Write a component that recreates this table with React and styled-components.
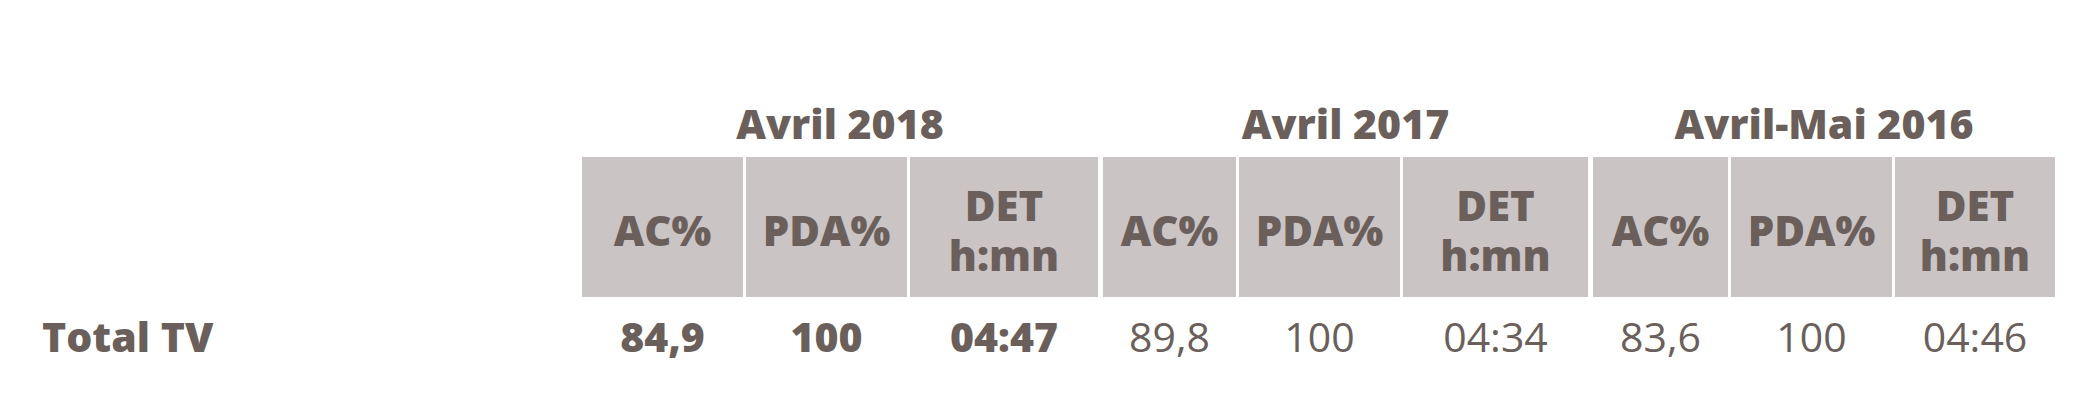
import styled, { createGlobalStyle } from "styled-components"

const GlobalStyle = createGlobalStyle`
  html, body {
    margin: 0;
    padding: 0;
    background: #ffffff;
  }
  body {
    font-family: "Open Sans", "Noto Sans", sans-serif;
    color: #6b5f5c;
  }
`

const Page = styled.div`
  width: 2100px;
  height: 420px;
  padding-top: 98px;
  box-sizing: border-box;
`

const Table = styled.div`
  display: grid;
  grid-template-columns: 579px 161px 161px 188px 135px 161px 185px 137px 161px 160px;
  column-gap: 3px;
`

const GroupTitle = styled.div`
  grid-column: ${p => p.$col} / span 3;
  margin-left: ${p => (p.$first ? "0" : "2px")};
  text-align: center;
  font-weight: 800;
  font-size: 41px;
  line-height: 50px;
  padding-bottom: 9px;
`

const HeadCell = styled.div`
  background: #cac4c4;
  height: 140px;
  margin-left: ${p => (p.$groupStart ? "2px" : "0")};
  display: flex;
  flex-direction: column;
  align-items: center;
  justify-content: center;
  padding-top: 6px;
  box-sizing: border-box;
  font-weight: 800;
  font-size: 42px;
  line-height: 50px;
  text-align: center;
`

const Label = styled.div`
  grid-column: 1;
  padding-left: 42px;
  margin-top: 14px;
  font-weight: 800;
  font-size: 41px;
  line-height: 50px;
`

const Value = styled.div`
  margin-left: ${p => (p.$groupStart ? "2px" : "0")};
  margin-top: 14px;
  text-align: center;
  font-size: 41px;
  line-height: 50px;
  font-weight: ${p => (p.$bold ? 800 : 400)};
`

const groups = [
  { title: "Avril 2018", bold: true, values: ["84,9", "100", "04:47"] },
  { title: "Avril 2017", bold: false, values: ["89,8", "100", "04:34"] },
  { title: "Avril-Mai 2016", bold: false, values: ["83,6", "100", "04:46"] },
]

export default function App() {
  return (
    <>
      <GlobalStyle />
      <Page>
        <Table>
          <div />
          {groups.map((g, i) => (
            <GroupTitle key={g.title} $col={2 + i * 3} $first={i === 0}>
              {g.title}
            </GroupTitle>
          ))}

          <div />
          {groups.map((g, i) => [
            <HeadCell key={g.title + "ac"} $groupStart={i > 0}>AC%</HeadCell>,
            <HeadCell key={g.title + "pda"}>PDA%</HeadCell>,
            <HeadCell key={g.title + "det"}>
              <span>DET</span>
              <span>h:mn</span>
            </HeadCell>,
          ])}

          <Label>Total TV</Label>
          {groups.map((g, i) =>
            g.values.map((v, j) => (
              <Value key={g.title + j} $bold={g.bold} $groupStart={i > 0 && j === 0}>
                {v}
              </Value>
            ))
          )}
        </Table>
      </Page>
    </>
  )
}
